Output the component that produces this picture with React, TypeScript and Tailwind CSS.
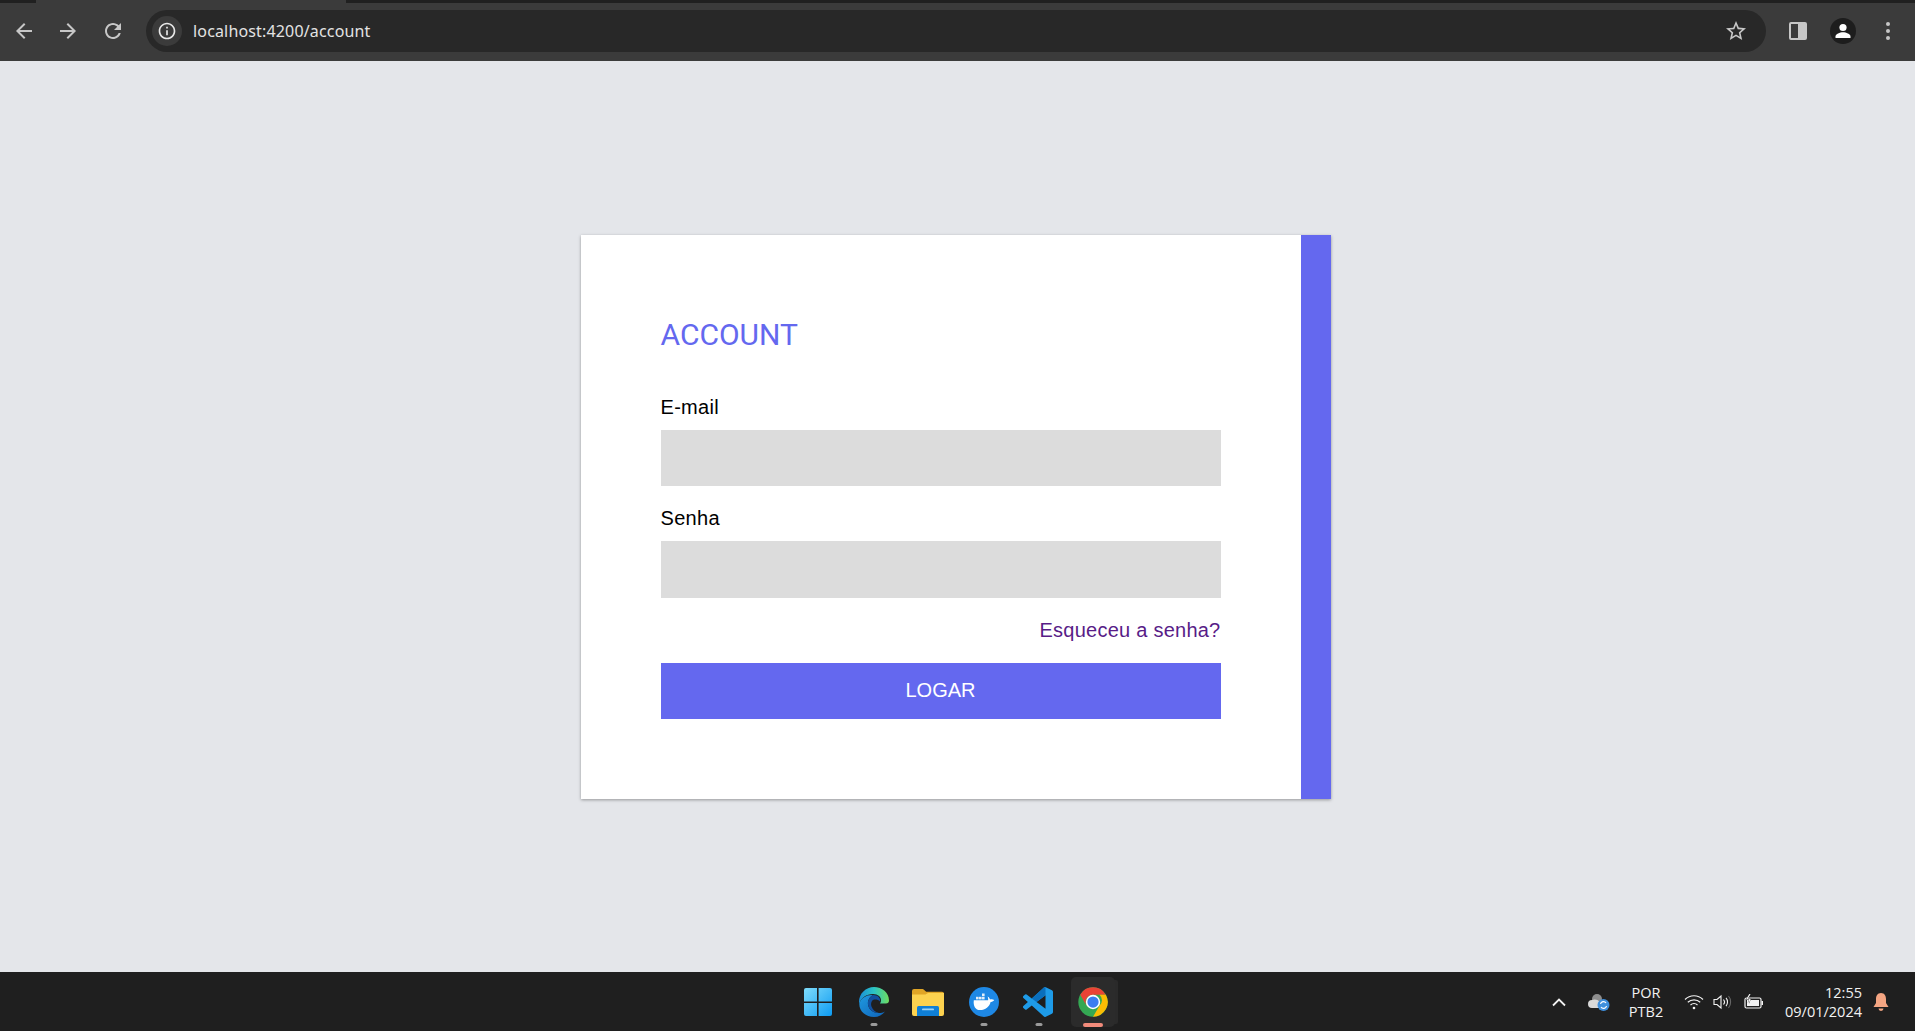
import React from 'react';

const ToolbarIcon = ({ d, size = 24 }: { d: string; size?: number }) => (
    <svg width={size} height={size} viewBox="0 0 24 24" fill="currentColor">
        <path d={d} />
    </svg>
);

const ICONS = {
    back: 'M20 11H7.83l5.59-5.59L12 4l-8 8 8 8 1.41-1.41L7.83 13H20v-2z',
    forward: 'M12 4l-1.41 1.41L16.17 11H4v2h12.17l-5.58 5.59L12 20l8-8z',
    reload: 'M17.65 6.35C16.2 4.9 14.21 4 12 4c-4.42 0-7.99 3.58-7.99 8s3.57 8 7.99 8c3.73 0 6.84-2.55 7.73-6h-2.08c-.82 2.33-3.04 4-5.65 4-3.31 0-6-2.69-6-6s2.69-6 6-6c1.66 0 3.14.69 4.22 1.78L13 11h7V4l-2.35 2.35z',
    info: 'M11 7h2v2h-2zm0 4h2v6h-2zm1-9C6.48 2 2 6.48 2 12s4.48 10 10 10 10-4.48 10-10S17.52 2 12 2zm0 18c-4.41 0-8-3.59-8-8s3.59-8 8-8 8 3.59 8 8-3.59 8-8 8z',
    star: 'M22 9.24l-7.19-.62L12 2 9.19 8.63 2 9.24l5.46 4.73L5.82 21 12 17.27 18.18 21l-1.63-7.03L22 9.24zM12 15.4l-3.76 2.27 1-4.28-3.32-2.88 4.38-.38L12 6.1l1.71 4.04 4.38.38-3.32 2.88 1 4.28L12 15.4z',
};

const BrowserBar = () => (
    <header className="h-[61px] shrink-0 bg-[#3b3b3b] text-[#c7c7c7]">
        <div className="flex h-[3px] bg-[#202020]">
            <div className="ml-[36px] h-full w-[310px] bg-[#3b3b3b]" />
        </div>
        <div className="flex h-[58px] items-center pb-[3px]">
            <div className="ml-[12px] flex w-[134px] items-center">
                <div className="w-[44px]"><ToolbarIcon d={ICONS.back} /></div>
                <div className="w-[45px]"><ToolbarIcon d={ICONS.forward} /></div>
                <ToolbarIcon d={ICONS.reload} />
            </div>
            <div className="flex h-[42px] w-[1620px] shrink-0 items-center rounded-full bg-[#282828] pl-[6px] pr-[18px]">
                <div className="flex h-[30px] w-[30px] items-center justify-center rounded-full bg-[#3b3b3b] text-[#e8e8e8]">
                    <ToolbarIcon d={ICONS.info} size={20} />
                </div>
                <span className="ml-[11px] flex-1 font-['Noto_Sans',sans-serif] text-[16px] tracking-[0.16px] text-[#e3e3e3]">localhost:4200/account</span>
                <ToolbarIcon d={ICONS.star} />
            </div>
            <div className="ml-[23px] h-[18px] w-[18px] rounded-[2px] border-2 border-[#c7c7c7] bg-transparent">
                <div className="ml-auto h-full w-[7px] bg-[#c7c7c7]" />
            </div>
            <div className="ml-[23px] flex h-[26px] w-[26px] items-center justify-center rounded-full bg-[#1d1d1d] text-white">
                <svg width="18" height="18" viewBox="0 0 18 18" fill="currentColor">
                    <circle cx="9" cy="5.5" r="3.6" />
                    <path d="M1.5 16v-1.5c0-2.6 4.4-4.2 7.5-4.2s7.5 1.6 7.5 4.2V16z" />
                </svg>
            </div>
            <div className="ml-[30px] flex flex-col gap-[3px]">
                <div className="h-[4px] w-[4px] rounded-full bg-[#c7c7c7]" />
                <div className="h-[4px] w-[4px] rounded-full bg-[#c7c7c7]" />
                <div className="h-[4px] w-[4px] rounded-full bg-[#c7c7c7]" />
            </div>
        </div>
    </header>
);

const Field = ({ label, tall }: { label: string; tall?: boolean }) => (
    <label className="block">
        <span className="mb-[9px] block h-[28px] text-xl leading-7 tracking-[0.3px] text-black">{label}</span>
        <input className={tall ? 'block h-[57px] w-full bg-[#dcdcdc] px-3 outline-none' : 'block h-[56px] w-full bg-[#dcdcdc] px-3 outline-none'} type="text" />
    </label>
);

const LoginCard = () => (
    <div className="flex h-[564px] w-[750px] bg-white shadow-[0_1px_3px_rgba(0,0,0,0.35)]">
        <form className="flex-1 px-[80px] pt-[76px] font-['Liberation_Sans',sans-serif]">
            <h1 className="h-[48px] font-['Roboto',sans-serif] text-[30px] leading-[48px] text-[#6468ef]">ACCOUNT</h1>
            <div className="mt-[34px] flex flex-col gap-[18px]">
                <Field label="E-mail" />
                <Field label="Senha" tall />
            </div>
            <div className="mt-[18px] h-[28px] text-right text-xl leading-7 tracking-[0.25px] text-[#581c87]">Esqueceu a senha?</div>
            <button className="mt-[19px] block h-[56px] w-full bg-[#6468ef] pb-[2px] text-xl text-white" type="button">LOGAR</button>
        </form>
        <div className="w-[30px] bg-[#6468ef]" />
    </div>
);

const WindowsLogo = () => (
    <svg width="30" height="30" viewBox="0 0 30 30">
        <defs>
            <linearGradient id="win" x1="0" y1="0" x2="1" y2="1">
                <stop offset="0" stopColor="#7fdcfb" />
                <stop offset="1" stopColor="#0d9bf2" />
            </linearGradient>
        </defs>
        <path fill="url(#win)" d="M1 3a2 2 0 0 1 2-2h11v13.4H1zM15.6 1H27a2 2 0 0 1 2 2v11.4H15.6zM1 16h13v13H3a2 2 0 0 1-2-2zM15.6 16H29v11a2 2 0 0 1-2 2H15.6z" />
    </svg>
);

const EdgeLogo = () => (
    <svg className="ml-[2px]" width="30" height="30" viewBox="0 0 30 30">
        <defs>
            <linearGradient id="edgeTop" x1="0" y1="0.5" x2="1" y2="0.5">
                <stop offset="0" stopColor="#1a8ed8" />
                <stop offset="0.5" stopColor="#2bc4c4" />
                <stop offset="1" stopColor="#6fdc5e" />
            </linearGradient>
            <linearGradient id="edgeBody" x1="0" y1="0" x2="1" y2="1">
                <stop offset="0" stopColor="#1f9ae0" />
                <stop offset="1" stopColor="#0f63b8" />
            </linearGradient>
        </defs>
        <path fill="url(#edgeBody)" d="M.3 17C1.500 11 7.500 7.500 14 8c-3.500 2-5.500 5.500-5 9.500.6 5 5.500 8.500 11 8.500 2.200 0 4-.4 6-1.500C23.500 28 19.500 30 15 30 7 30 .3 24.500.3 17z" />
        <path fill="#11509f" d="M14 8c4.500-.2 8 2.800 7 6.500-2.500-2.500-6.500-2.500-8-.5-1 1.500-1.200 3.500-.5 5.500 1.300 3.500 4.500 6 7.500 6.500-5.500 0-10.400-3.500-11-8.500C8.500 13.500 10.500 10 14 8z" />
        <path fill="url(#edgeTop)" d="M15 0C6.700 0 0 6.700 0 15c0 .7.100 1.400.3 2C1.500 11 7.500 7 14 7c5 0 8.500 3 8 7-.1 1-.5 1.800-1 2.500h6c1.800 0 3-1.200 3-3C30 5.500 23 0 15 0z" />
    </svg>
);

const FolderLogo = () => (
    <svg width="32" height="28" viewBox="0 0 32 28">
        <path fill="#e0a526" d="M0 3a2 2 0 0 1 2-2h8c1 0 1.500.4 2.200 1l2 1.800H30a2 2 0 0 1 2 2V10H0z" />
        <path fill="#fcd24f" d="M0 6.500h13.500l2.500-1.500H32v21a2 2 0 0 1-2 2H2a2 2 0 0 1-2-2z" />
        <path fill="#0f7fd6" d="M5 28v-8.500A1.500 1.500 0 0 1 6.500 18h19a1.500 1.500 0 0 1 1.500 1.500V28z" />
        <rect x="10" y="20.500" width="12" height="1.800" rx=".9" fill="#9bd3f7" />
    </svg>
);

const DockerLogo = () => (
    <svg className="ml-[2px]" width="30" height="30" viewBox="0 0 30 30">
        <circle cx="15" cy="15" r="15" fill="#1e88e5" />
        <g fill="#e4eef8">
            <rect x="13" y="6.500" width="2.600" height="2.600" />
            <rect x="7" y="9.800" width="2.600" height="2.600" />
            <rect x="10" y="9.800" width="2.600" height="2.600" />
            <rect x="13" y="9.800" width="2.600" height="2.600" />
        </g>
        <path fill="#fff" d="M4.800 13.200h14.300c.3-1.500 0-2.800-.6-3.800 1.300.5 2.300 1.800 2.500 3.100 1.300-.5 3-.3 4.200.6-.6 1.300-2.200 2-3.600 1.800C20.500 19.500 16.500 23 11 23c-4.300 0-7-3.700-6.200-9.800z" />
    </svg>
);

const VsCodeLogo = () => (
    <svg width="30" height="30" viewBox="0 0 24 24">
        <path fill="#1e9be8" d="M23.150 2.587L18.210.21a1.494 1.494 0 0 0-1.705.29l-9.460 8.630-4.120-3.128a.999.999 0 0 0-1.276.057L.327 7.261A1 1 0 0 0 .326 8.740L3.899 12 .326 15.260a1 1 0 0 0 .001 1.479L1.650 17.940a.999.999 0 0 0 1.276.057l4.120-3.128 9.460 8.630a1.492 1.492 0 0 0 1.704.29l4.942-2.377A1.500 1.500 0 0 0 24 20.060V3.939a1.500 1.500 0 0 0-.850-1.352zm-5.146 14.861L10.826 12l7.178-5.448v10.896z" />
        <path fill="#0a6fbd" d="M18 .1a1.500 1.500 0 0 0-1.500.4L7.050 9.130 10.830 12l7.170-5.450z" />
    </svg>
);

const ChromeLogo = () => (
    <svg width="30" height="30" viewBox="0 0 48 48">
        <circle cx="24" cy="24" r="23.500" fill="#34a853" />
        <path fill="#ea4335" d="M3.600 12.200A23.500 23.500 0 0 1 44.400 12.200H24A12 12 0 0 0 13.600 30z" />
        <path fill="#fbbc04" d="M44.400 12.200A23.500 23.500 0 0 1 24 47.500L34.400 30A12 12 0 0 0 34.400 12.200z" />
        <circle cx="24" cy="24" r="11.500" fill="#fff" />
        <circle cx="24" cy="24" r="9" fill="#3b7df0" />
    </svg>
);

const TaskTile = ({ children, running, active }: { children: React.ReactNode; running?: boolean; active?: boolean }) => (
    <div className={active ? 'relative mx-[5.5px] flex h-[50px] w-[44px] items-center justify-center rounded-[5px] bg-[#2b2b2b] shadow-[6px_0_0_-3px_#2a2a2a]' : 'relative flex h-[50px] w-[55px] items-center justify-center'}>
        {children}
        {running && <div className="absolute bottom-[1px] left-1/2 ml-[1px] h-[3px] w-[7px] -translate-x-1/2 rounded-full bg-[#9a9a9a]" />}
        {active && <div className="absolute bottom-[0px] left-1/2 h-[4px] w-[20px] -translate-x-1/2 rounded-full bg-[#f28b7b]" />}
    </div>
);

const Tray = () => (
    <div className="flex items-center justify-end text-[#f2f2f2]">
        <svg width="16" height="10" viewBox="0 0 16 10" fill="none" stroke="currentColor" strokeWidth="1.800">
            <path d="M2 8.500l6-6 6 6" />
        </svg>
        <svg className="ml-[21px]" width="22" height="20" viewBox="0 0 22 20">
            <circle cx="9" cy="7" r="5" fill="#8d8d8d" />
            <path fill="#d9d9d9" d="M4 16a4 4 0 0 1 0-8c2-1 7-1 8 3 2 0 2 5-1 5z" />
            <circle cx="15.500" cy="13" r="6" fill="#3f8fdc" />
            <path d="M12.500 12a3 3 0 0 1 5.500-1M18.500 14a3 3 0 0 1-5.500 1" stroke="#fff" strokeWidth="1.200" fill="none" />
        </svg>
        <div className="ml-[16px] w-[40px] text-center text-[14.500px] leading-[19px]">
            <div>POR</div>
            <div>PTB2</div>
        </div>
        <svg className="ml-[18px]" width="20" height="16" viewBox="0 0 20 16" fill="none" stroke="currentColor" strokeWidth="1.200">
            <path d="M1 5.500c5-5 13-5 18 0M3.800 8.300c3.500-3.300 9-3.300 12.400 0M6.500 11c2-1.800 5-1.800 7 0" />
            <circle cx="10" cy="14" r="1.300" fill="currentColor" stroke="none" />
        </svg>
        <svg className="ml-[9px]" width="20" height="16" viewBox="0 0 20 16" fill="none" stroke="currentColor" strokeWidth="1.100">
            <path d="M1 5.500h3l4-3.500v12l-4-3.500H1z" />
            <path d="M10.500 5.500c1.200 1.400 1.200 3.600 0 5M13 3.800c2 2.300 2 6 0 8.400" />
            <path d="M15.500 2c2.800 3.300 2.800 8.700 0 12" stroke="#666" />
        </svg>
        <svg className="ml-[11px]" width="20" height="16" viewBox="0 0 20 16" fill="none" stroke="currentColor" strokeWidth="1.200">
            <rect x="1" y="4" width="16" height="10" rx="1.500" />
            <rect x="17.500" y="7" width="1.500" height="4" fill="currentColor" stroke="none" />
            <path d="M3 12V6h12v6z" fill="currentColor" stroke="none" />
            <path d="M6 0L3 5h3L4.500 9" stroke="#1f1f1f" strokeWidth="1.600" />
            <path d="M6 0L3 5h3L4.500 9" />
        </svg>
        <div className="ml-[16px] w-[82px] text-right text-[14.500px] leading-[19px]">
            <div>12:55</div>
            <div>09/01/2024</div>
        </div>
        <svg className="ml-[10px] mr-[25px]" width="18" height="20" viewBox="0 0 18 20" fill="#f4a582">
            <path d="M9 1C5.500 1 4 4 4 7v4l-2.500 4h15L14 11V7c0-3-1.500-6-5-6z" />
            <path d="M6.500 16.500h5a2.500 2.500 0 0 1-5 0z" />
        </svg>
    </div>
);

const Taskbar = () => (
    <footer className="grid h-[59px] shrink-0 grid-cols-[1fr_auto_1fr] items-center bg-[#1f1f1f] font-['Open_Sans',sans-serif]">
        <div />
        <div className="mr-[4px] flex items-center">
            <TaskTile><WindowsLogo /></TaskTile>
            <TaskTile running><EdgeLogo /></TaskTile>
            <TaskTile><FolderLogo /></TaskTile>
            <TaskTile running><DockerLogo /></TaskTile>
            <TaskTile running><VsCodeLogo /></TaskTile>
            <TaskTile active><ChromeLogo /></TaskTile>
        </div>
        <Tray />
    </footer>
);

export default function App() {
    return (
        <div className="flex h-[1031px] flex-col overflow-hidden bg-[#e4e6ea]">
            <BrowserBar />
            <main className="flex flex-1 items-center justify-center pr-[4px]">
                <LoginCard />
            </main>
            <Taskbar />
        </div>
    );
}
